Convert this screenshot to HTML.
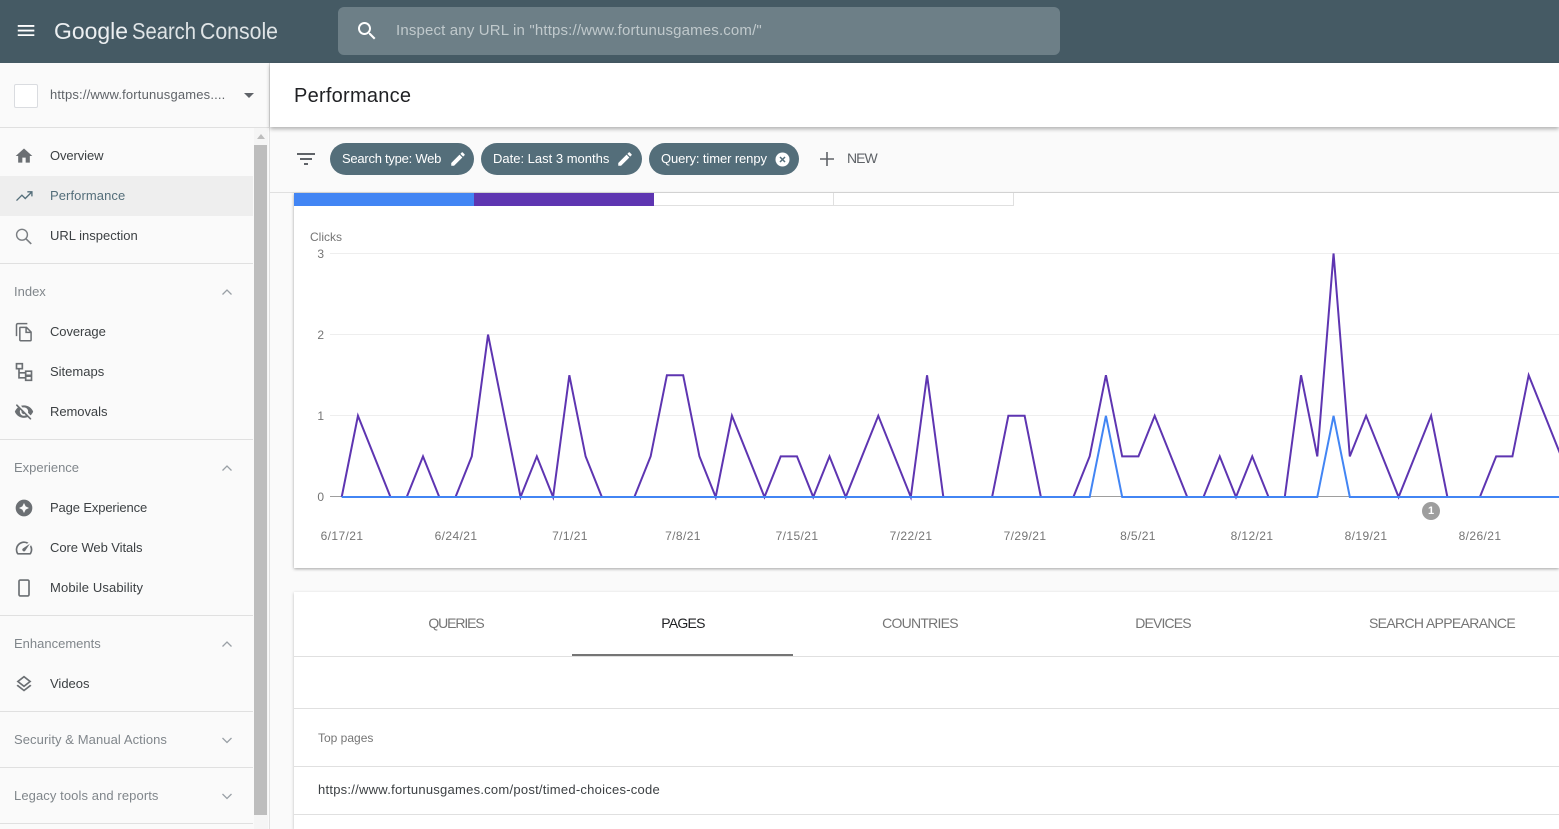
<!DOCTYPE html>
<html><head><meta charset="utf-8"><title>Performance</title>
<style>
html,body{margin:0;padding:0;width:1559px;height:829px;overflow:hidden;background:#fafafa;font-family:"Liberation Sans",sans-serif}
.a{position:absolute}
.t{position:absolute;white-space:nowrap;font-size:13px;line-height:16px}
.n{color:#3c4043;left:50px}
.s{color:#80868b;left:14px}
.l{position:absolute;height:1px;background:#e0e0e0}
.i{position:absolute;width:20px;height:20px;left:14px;fill:#6b6f73}
.c{position:absolute;width:16px;height:16px;left:219px;fill:none;stroke:#9aa0a6;stroke-width:1.3}
.x{color:#757575;font-size:12px;top:528px;text-align:center;width:70px;letter-spacing:.4px}
.y{color:#757575;font-size:12px;left:300px;width:24px;text-align:right}
.g{position:absolute;left:330px;width:1229px;height:1px;background:#eee}
.tab{color:#757575;font-size:14px;top:615px;text-align:center;letter-spacing:-.75px}
.chip{position:absolute;top:143px;height:32px;border-radius:16px;background:#546e7a}
.chip span{position:absolute;left:12px;top:8px;color:#fff;font-size:13px;line-height:16px;white-space:nowrap}
</style></head><body>
<div class="a" style="left:0;top:0;width:1559px;height:63px;background:#455a64"></div>
<svg class="a" style="left:14px;top:19px" width="24" height="24"><path fill="#fff" d="M3 18h18v-2H3v2zm0-5h18v-2H3v2zm0-7v2h18V6H3z" transform="translate(1 .5) scale(.92)"/></svg>
<svg class="a" style="left:50px;top:9px" width="240" height="44"><text x="4" y="30" font-family="Liberation Sans" font-size="23" fill="#eceff1" textLength="74" lengthAdjust="spacingAndGlyphs">Google</text><text x="82" y="30" font-family="Liberation Sans" font-size="23" fill="#dfe4e6" textLength="64" lengthAdjust="spacingAndGlyphs">Search</text><text x="150" y="30" font-family="Liberation Sans" font-size="23" fill="#dfe4e6" textLength="78" lengthAdjust="spacingAndGlyphs">Console</text></svg>
<div class="a" style="left:338px;top:7px;width:722px;height:48px;border-radius:6px;background:#6d7f87"></div>
<svg class="a" style="left:355px;top:19px" width="24" height="24"><path fill="#fff" d="M15.5 14h-.79l-.28-.27C15.41 12.59 16 11.11 16 9.5 16 5.91 13.09 3 9.5 3S3 5.91 3 9.5 5.91 16 9.5 16c1.61 0 3.09-.59 4.23-1.57l.27.28v.79l5 4.99L20.49 19l-4.99-5zm-6 0C7.01 14 5 11.99 5 9.5S7.01 5 9.5 5 14 7.01 14 9.5 11.99 14 9.5 14z"/></svg>
<div class="t" style="left:396px;top:23px;font-size:15px;color:#c0c9cc;letter-spacing:.16px">Inspect any URL in "https://www.fortunusgames.com/"</div>

<div class="a" style="left:0;top:63px;width:269px;height:766px;background:#fafafa"></div>
<div class="a" style="left:269px;top:63px;width:1px;height:766px;background:#e0e0e0"></div>
<div class="a" style="left:14px;top:84px;width:22px;height:22px;background:#fff;border:1px solid #dadce0;border-radius:2px"></div>
<div class="t" style="left:50px;top:87px;color:#5f6368;letter-spacing:.17px">https://www.fortunusgames....</div>
<div class="a" style="left:244px;top:93px;width:0;height:0;border-left:5px solid transparent;border-right:5px solid transparent;border-top:5px solid #5f6368"></div>
<div class="l" style="left:0;top:127px;width:270px"></div>

<div class="a" style="left:254px;top:128px;width:14px;height:701px;background:#f5f5f5"></div>
<div class="a" style="left:254px;top:145px;width:13px;height:670px;background:#bdbdbd"></div>
<div class="a" style="left:257px;top:134px;width:0;height:0;border-left:4px solid transparent;border-right:4px solid transparent;border-bottom:5px solid #bdbdbd"></div>

<div class="a" style="left:0;top:176px;width:253px;height:40px;background:#eeeeee"></div>

<svg class="i" style="top:146px" viewBox="0 0 24 24"><path d="M10 20v-6h4v6h5v-8h3L12 3 2 12h3v8z"/></svg>
<div class="t n" style="top:148px;letter-spacing:-.1px">Overview</div>
<svg class="i" style="top:186px" viewBox="0 0 24 24"><path fill="none" stroke="#546e7a" stroke-width="1.600" d="M3 17.500l6.500-6.500 4 4L21 7.500M16 7h5.500v5.500"/></svg>
<div class="t n" style="top:188px;color:#546e7a;letter-spacing:.08px">Performance</div>
<svg class="i" style="top:226px" viewBox="0 0 24 24"><circle cx="9.600" cy="10.500" r="6.500" fill="none" stroke="#7b7f83" stroke-width="1.700"/><path d="M14.500 15.500l6.200 6" stroke="#7b7f83" stroke-width="2" fill="none"/></svg>
<div class="t n" style="top:228px">URL inspection</div>
<div class="l" style="left:0;top:263px;width:253px"></div>

<div class="t s" style="top:284px">Index</div>
<svg class="c" style="top:284px"><path d="M3.500 10.500L8 6l4.500 4.500"/></svg>
<svg class="i" style="top:322px" viewBox="0 0 24 24"><path fill="none" stroke="#6b6f73" stroke-width="1.800" d="M3 17V3.500C3 2.700 3.700 2 4.500 2H16M7.500 6.500h7.500l5.500 5.500v9.500c0 .6-.4 1-1 1H8c-.6 0-1-.4-1-1V7c0-.3.2-.5.500-.5zM14.500 6.500V12.500h6"/></svg>
<div class="t n" style="top:324px;letter-spacing:-.08px">Coverage</div>
<svg class="i" style="top:362px" viewBox="0 0 24 24"><path fill="none" stroke="#6b6f73" stroke-width="2" d="M3 2h7v6H3zM14 11h7v5h-7zM14 17h7v5h-7zM6 8v11h8M6 13h8"/></svg>
<div class="t n" style="top:364px">Sitemaps</div>
<svg class="i" style="top:402px" viewBox="0 0 24 24"><path d="M12 6.500c2.760 0 5 2.240 5 5 0 .51-.1 1-.24 1.460l3.060 3.060c1.390-1.230 2.490-2.770 3.180-4.530C21.270 7.110 17 4 12 4c-1.270 0-2.490.2-3.640.57l2.170 2.170c.47-.14.96-.24 1.470-.24zM2.710 3.160c-.39.39-.39 1.020 0 1.410l1.970 1.970C3.060 7.830 1.770 9.530 1 11.500 2.730 15.890 7 19 12 19c1.520 0 2.970-.3 4.310-.82l2.720 2.720c.39.39 1.020.39 1.410 0 .39-.39.39-1.020 0-1.410L4.130 3.160c-.39-.39-1.030-.39-1.420 0zM12 16.500c-2.760 0-5-2.240-5-5 0-.77.18-1.500.49-2.140l1.570 1.570c-.03.18-.06.37-.06.57 0 1.660 1.340 3 3 3 .2 0 .38-.03.57-.07L14.140 16c-.65.32-1.370.5-2.140.5z"/></svg>
<div class="t n" style="top:404px;letter-spacing:-.05px">Removals</div>
<div class="l" style="left:0;top:439px;width:253px"></div>

<div class="t s" style="top:460px">Experience</div>
<svg class="c" style="top:460px"><path d="M3.500 10.500L8 6l4.500 4.500"/></svg>
<svg class="i" style="top:498px" viewBox="0 0 24 24"><path fill-rule="evenodd" d="M12 2a10 10 0 1 0 0 20 10 10 0 0 0 0-20zM12 6l2 4 4 2-4 2-2 4-2-4-4-2 4-2z"/></svg>
<div class="t n" style="top:500px;letter-spacing:-.13px">Page Experience</div>
<svg class="i" style="top:538px" viewBox="0 0 24 24"><path d="M20.380 8.570l-1.230 1.850a8 8 0 0 1-.22 7.580H5.070A8 8 0 0 1 15.580 6.850l1.850-1.230A10 10 0 0 0 3.350 19a2 2 0 0 0 1.720 1h13.850a2 2 0 0 0 1.740-1 10 10 0 0 0-.27-10.440zm-9.790 6.840a2 2 0 0 0 2.830 0l5.660-8.490-8.490 5.660a2 2 0 0 0 0 2.830z"/></svg>
<div class="t n" style="top:540px;letter-spacing:-.07px">Core Web Vitals</div>
<svg class="i" style="top:578px" viewBox="0 0 24 24"><rect x="6" y="2.500" width="12" height="19" rx="1.500" fill="none" stroke="#6b6f73" stroke-width="2"/></svg>
<div class="t n" style="top:580px;letter-spacing:.13px">Mobile Usability</div>
<div class="l" style="left:0;top:615px;width:253px"></div>

<div class="t s" style="top:636px">Enhancements</div>
<svg class="c" style="top:636px"><path d="M3.500 10.500L8 6l4.500 4.500"/></svg>
<svg class="i" style="top:674px" viewBox="0 0 24 24"><path d="M11.990 18.540l-7.370-5.730L3 14.070l9 7 9-7-1.630-1.270zM12 16l7.360-5.730L21 9l-9-7-9 7 1.630 1.270L12 16zm0-11.470L17.740 9 12 13.470 6.260 9 12 4.530z"/></svg>
<div class="t n" style="top:676px">Videos</div>
<div class="l" style="left:0;top:711px;width:253px"></div>

<div class="t s" style="top:732px;letter-spacing:.08px">Security &amp; Manual Actions</div>
<svg class="c" style="top:732px"><path d="M3.500 6L8 10.500 12.500 6"/></svg>
<div class="l" style="left:0;top:767px;width:253px"></div>
<div class="t s" style="top:788px;letter-spacing:.09px">Legacy tools and reports</div>
<svg class="c" style="top:788px"><path d="M3.500 6L8 10.500 12.500 6"/></svg>
<div class="l" style="left:0;top:823px;width:253px"></div>

<!-- filter bar -->
<svg class="a" style="left:294px;top:147px" width="24" height="24"><path fill="#5f6368" d="M10 18h4v-2h-4v2zM3 6v2h18V6H3zm3 7h12v-2H6v2z"/></svg>
<div class="chip" style="left:330px;width:144px"><span style="letter-spacing:-.25px">Search type: Web</span><svg class="a" style="left:119px;top:7px" width="18" height="18" viewBox="0 0 24 24"><path fill="#fff" d="M3 17.250V21h3.750L17.810 9.940l-3.750-3.750L3 17.250zM20.710 7.040c.39-.39.39-1.020 0-1.410l-2.340-2.340c-.39-.39-1.020-.39-1.410 0l-1.830 1.830 3.750 3.750 1.830-1.830z"/></svg></div>
<div class="chip" style="left:481px;width:161px"><span>Date: Last 3 months</span><svg class="a" style="left:135px;top:7px" width="18" height="18" viewBox="0 0 24 24"><path fill="#fff" d="M3 17.250V21h3.750L17.810 9.940l-3.750-3.750L3 17.250zM20.710 7.040c.39-.39.39-1.020 0-1.410l-2.340-2.340c-.39-.39-1.020-.39-1.410 0l-1.830 1.830 3.750 3.750 1.830-1.830z"/></svg></div>
<div class="chip" style="left:649px;width:150px"><span style="letter-spacing:-.1px">Query: timer renpy</span><svg class="a" style="left:126px;top:9px" width="15" height="15" viewBox="0 0 15 15"><circle cx="7.500" cy="7.500" r="7" fill="#fff"/><path d="M5 5l5 5M10 5l-5 5" stroke="#546e7a" stroke-width="1.500"/></svg></div>
<svg class="a" style="left:817px;top:149px" width="20" height="20"><path d="M3 10h14M10 3v14" stroke="#5f6368" stroke-width="1.600"/></svg>
<div class="t" style="left:847px;top:150px;font-size:14px;color:#5f6368;letter-spacing:-1px">NEW</div>
<div class="l" style="left:270px;top:192px;width:1289px"></div>

<!-- chart card -->
<div class="a" style="left:294px;top:193px;width:1265px;height:375px;background:#fff;box-shadow:0 1px 3px rgba(0,0,0,.35)"></div>
<div class="a" style="left:294px;top:193px;width:180px;height:13px;background:#4285f4"></div>
<div class="a" style="left:474px;top:193px;width:180px;height:13px;background:#5e35b1"></div>
<div class="a" style="left:654px;top:193px;width:360px;height:12px;border-bottom:1px solid #e0e0e0"></div>
<div class="a" style="left:833px;top:193px;width:1px;height:13px;background:#e0e0e0"></div>
<div class="a" style="left:1013px;top:193px;width:1px;height:13px;background:#e0e0e0"></div>

<div class="t" style="left:310px;top:229px;font-size:12px;color:#757575">Clicks</div>
<div class="t y" style="top:246px">3</div><div class="t y" style="top:327px">2</div><div class="t y" style="top:408px">1</div><div class="t y" style="top:489px">0</div>
<div class="g" style="top:253px"></div><div class="g" style="top:334px"></div><div class="g" style="top:415px"></div><div class="g" style="top:496px;background:#9e9e9e"></div>

<svg class="a" style="left:0;top:0" width="1559" height="829">
<g transform="translate(341.7,497) scale(16.26,-81.2)" fill="none" stroke-linejoin="miter">
<polyline vector-effect="non-scaling-stroke" stroke="#5e35b1" stroke-width="2" points="0,0 1,1 2,.5 3,0 4,0 5,.5 6,0 7,0 8,.5 9,2 10,1 11,0 12,.5 13,0 14,1.500 15,.5 16,0 17,0 18,0 19,.5 20,1.500 21,1.500 22,.5 23,0 24,1 25,.5 26,0 27,.5 28,.5 29,0 30,.5 31,0 32,.5 33,1 34,.5 35,0 36,1.500 37,0 38,0 39,0 40,0 41,1 42,1 43,0 44,0 45,0 46,.5 47,1.500 48,.5 49,.5 50,1 51,.5 52,0 53,0 54,.5 55,0 56,.5 57,0 58,0 59,1.500 60,.5 61,3 62,.5 63,1 64,.5 65,0 66,.5 67,1 68,0 69,0 70,0 71,.5 72,.5 73,1.500 74,1 75,.5"/>
<polyline vector-effect="non-scaling-stroke" stroke="#4285f4" stroke-width="2" points="0,0 46,0 47,1 48,0 60,0 61,1 62,0 75,0"/>
</g>
</svg>
<div class="a" style="left:1422px;top:502px;width:18px;height:18px;border-radius:50%;background:#9e9e9e;color:#fff;font-size:11px;line-height:18px;text-align:center;font-weight:bold">1</div>

<div class="t x" style="left:307px">6/17/21</div>
<div class="t x" style="left:421px">6/24/21</div>
<div class="t x" style="left:535px">7/1/21</div>
<div class="t x" style="left:648px">7/8/21</div>
<div class="t x" style="left:762px">7/15/21</div>
<div class="t x" style="left:876px">7/22/21</div>
<div class="t x" style="left:990px">7/29/21</div>
<div class="t x" style="left:1103px">8/5/21</div>
<div class="t x" style="left:1217px">8/12/21</div>
<div class="t x" style="left:1331px">8/19/21</div>
<div class="t x" style="left:1445px">8/26/21</div>

<!-- title bar -->
<div class="a" style="left:270px;top:63px;width:1289px;height:64px;background:#fff;box-shadow:0 2px 4px rgba(0,0,0,.3)"></div>
<div class="t" style="left:294px;top:84px;font-size:20px;line-height:24px;color:#202124;letter-spacing:.25px">Performance</div>

<!-- table card -->
<div class="a" style="left:294px;top:592px;width:1265px;height:237px;background:#fff;box-shadow:0 1px 3px rgba(0,0,0,.25)"></div>
<div class="t tab" style="left:378px;width:156px;letter-spacing:-1.100px">QUERIES</div>
<div class="t tab" style="left:605px;width:156px;color:#202124">PAGES</div>
<div class="t tab" style="left:842px;width:156px">COUNTRIES</div>
<div class="t tab" style="left:1085px;width:156px;letter-spacing:-.85px">DEVICES</div>
<div class="t tab" style="left:1342px;width:200px;letter-spacing:-.65px">SEARCH APPEARANCE</div>
<div class="l" style="left:294px;top:656px;width:1265px"></div>
<div class="a" style="left:572px;top:654px;width:221px;height:2px;background:#757575"></div>
<div class="l" style="left:294px;top:708px;width:1265px"></div>
<div class="t" style="left:318px;top:730px;font-size:12px;color:#757575">Top pages</div>
<div class="l" style="left:294px;top:766px;width:1265px"></div>
<div class="t" style="left:318px;top:782px;color:#3c4043;letter-spacing:.25px">https://www.fortunusgames.com/post/timed-choices-code</div>
<div class="l" style="left:294px;top:814px;width:1265px"></div>
</body></html>
